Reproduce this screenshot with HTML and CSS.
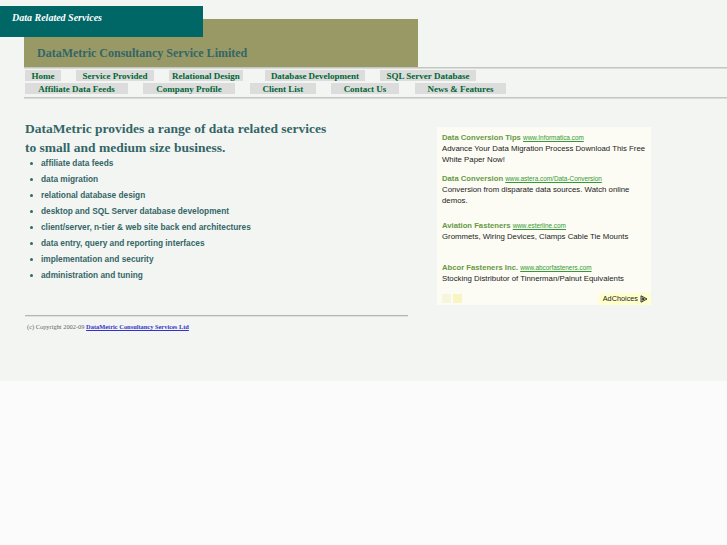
FILE: index.html
```html
<!DOCTYPE html>
<html>
<head>
<meta charset="utf-8">
<title>DataMetric Consultancy Service Limited</title>
<link rel="stylesheet" href="styles.css">
</head>
<body>
<div class="page">
  <div class="header">
    <div class="tag">Data Related Services</div>
    <div class="banner">DataMetric Consultancy Service Limited</div>
  </div>
  <div class="rule top"></div>
  <div class="nav row1">
    <a>Home</a><a>Service Provided</a><a>Relational Design</a><a>Database Development</a><a>SQL Server Database</a>
  </div>
  <div class="nav row2">
    <a>Affiliate Data Feeds</a><a>Company Profile</a><a>Client List</a><a>Contact Us</a><a>News &amp; Features</a>
  </div>
  <div class="rule"></div>
  <div class="main">
    <div class="left">
      <h1>DataMetric provides a range of data related services<br>to small and medium size business.</h1>
      <ul class="services">
        <li>affiliate data feeds</li>
        <li>data migration</li>
        <li>relational database design</li>
        <li>desktop and SQL Server database development</li>
        <li>client/server, n-tier &amp; web site back end architectures</li>
        <li>data entry, query and reporting interfaces</li>
        <li>implementation and security</li>
        <li>administration and tuning</li>
      </ul>
      <div class="foot-rule"></div>
      <p class="copy">(c) Copyright 2002-09 <a>DataMetric Consultancy Services Ltd</a></p>
    </div>
    <div class="ads">
      <div class="ad">
        <div class="ad-title">Data Conversion Tips <a>www.Informatica.com</a></div>
        <div class="ad-text">Advance Your Data Migration Process Download This Free White Paper Now!</div>
      </div>
      <div class="ad">
        <div class="ad-title">Data Conversion <a>www.astera.com/Data-Conversion</a></div>
        <div class="ad-text">Conversion from disparate data sources. Watch online demos.</div>
      </div>
      <div class="ad">
        <div class="ad-title">Aviation Fasteners <a>www.esterline.com</a></div>
        <div class="ad-text">Grommets, Wiring Devices, Clamps Cable Tie Mounts</div>
      </div>
      <div class="ad">
        <div class="ad-title">Abcor Fasteners Inc. <a>www.abcorfasteners.com</a></div>
        <div class="ad-text">Stocking Distributor of Tinnerman/Palnut Equivalents</div>
      </div>
      <div class="ad-foot">
        <div class="arrows"><span class="arr prev"></span><span class="arr next"></span></div>
        <div class="choices">AdChoices <svg width="8" height="8" viewBox="0 0 8 8"><path d="M1 0.8 L7 4 L1 7.2 Z M2.3 2.8 L4.4 4 L2.3 5.2 Z" fill="none" stroke="#222" stroke-width="0.9"/></svg></div>
      </div>
    </div>
  </div>
</div>
</body>
</html>
```

FILE: styles.css
```css
html, body {
  margin: 0;
  padding: 0;
  background: #fbfbfb;
}
.page {
  height: 381px;
  background: #f3f5f3;
  font-family: "Liberation Serif", "Times New Roman", serif;
  overflow: hidden;
}
.header {
  padding-top: 6px;
}
.tag {
  position: relative;
  z-index: 1;
  width: 191px;
  height: 31px;
  padding-left: 12px;
  background: #006666;
  color: #ffffff;
  font-style: italic;
  font-weight: bold;
  font-size: 10px;
  line-height: 24px;
}
.banner {
  margin-top: -18px;
  margin-left: 24px;
  width: 394px;
  height: 48px;
  box-sizing: border-box;
  padding: 0 0 6px 13px;
  background: #999966;
  color: #336666;
  font-weight: bold;
  font-size: 12px;
  line-height: 16px;
  display: flex;
  align-items: flex-end;
}
.rule {
  margin-left: 24px;
  height: 1px;
  border-top: 1px solid #c4c6c4;
  background: #dadcda;
}
.nav {
  display: flex;
  margin-left: 25px;
}
.nav a {
  display: block;
  background: #dcdcdc;
  color: #006633;
  font-weight: bold;
  font-size: 9px;
  line-height: 12px;
  height: 11px;
  text-align: center;
  margin-right: 15px;
  overflow: hidden;
}
.row1 { margin-top: 1px; }
.row2 { margin-top: 2px; margin-bottom: 3px; }
.row1 a:nth-child(1) { width: 36px; }
.row1 a:nth-child(2) { width: 78px; }
.row1 a:nth-child(3) { width: 74px; margin-right: 22px; }
.row1 a:nth-child(4) { width: 100px; }
.row1 a:nth-child(5) { width: 96px; }
.row2 a:nth-child(1) { width: 103px; }
.row2 a:nth-child(2) { width: 92px; }
.row2 a:nth-child(3) { width: 66px; }
.row2 a:nth-child(4) { width: 68px; margin-right: 16px; }
.row2 a:nth-child(5) { width: 91px; }
.main {
  display: flex;
  align-items: flex-start;
  margin-left: 25px;
}
.left {
  width: 383px;
  padding-top: 21px;
}
h1 {
  margin: 0;
  color: #336666;
  font-size: 13.5px;
  font-weight: bold;
  line-height: 18.5px;
}
.services {
  margin: 0;
  padding: 0 0 0 16px;
  list-style: none;
  font-family: "Liberation Sans", Arial, sans-serif;
  font-weight: bold;
  font-size: 8.3px;
  color: #336666;
}
.services li {
  position: relative;
  height: 16px;
  line-height: 13px;
}
.services li::before {
  content: "";
  position: absolute;
  left: -11px;
  top: 5px;
  width: 3px;
  height: 3px;
  border-radius: 50%;
  background: #336666;
}
.foot-rule {
  margin-top: 30px;
  height: 0;
  border-top: 1px solid #b4b6b4;
  border-bottom: 1px solid #e0e2e0;
}
.copy {
  margin: 6px 0 0 2px;
  font-size: 6.4px;
  color: #666666;
}
.copy a {
  color: #3333cc;
  font-weight: bold;
  text-decoration: underline;
}
.ads {
  margin-left: 29px;
  margin-top: 28px;
  width: 214px;
  height: 178px;
  background: #fcfcf4;
  box-sizing: border-box;
  padding: 5px 0 0 5px;
  font-family: "Liberation Sans", Arial, sans-serif;
  display: flex;
  flex-direction: column;
}
.ad-title {
  color: #669944;
  font-weight: bold;
  font-size: 7.7px;
  line-height: 11px;
}
.ad-title a {
  color: #339933;
  font-weight: normal;
  font-size: 6.4px;
  text-decoration: underline;
}
.ad-text {
  color: #222222;
  font-size: 7.8px;
  line-height: 11px;
  padding-right: 2px;
}
.ad:nth-child(1) { height: 41px; }
.ad:nth-child(2) { height: 47px; }
.ad:nth-child(3) { height: 42px; }
.ad:nth-child(4) { height: 27px; }
.ad-foot {
  margin-top: auto;
  display: flex;
  justify-content: space-between;
  align-items: flex-end;
}
.arrows {
  display: flex;
  gap: 2px;
  margin-bottom: 2px;
}
.arr {
  display: block;
  width: 9px;
  height: 9px;
  background: #f6f6dc;
}
.arr.next { background: #f8f4c4; }
.choices {
  background: #ffffcc;
  font-size: 7.3px;
  color: #222;
  height: 12px;
  line-height: 12px;
  padding: 0 3px 0 4px;
  display: flex;
  align-items: center;
  gap: 2px;
  border-top-left-radius: 4px;
}
```
